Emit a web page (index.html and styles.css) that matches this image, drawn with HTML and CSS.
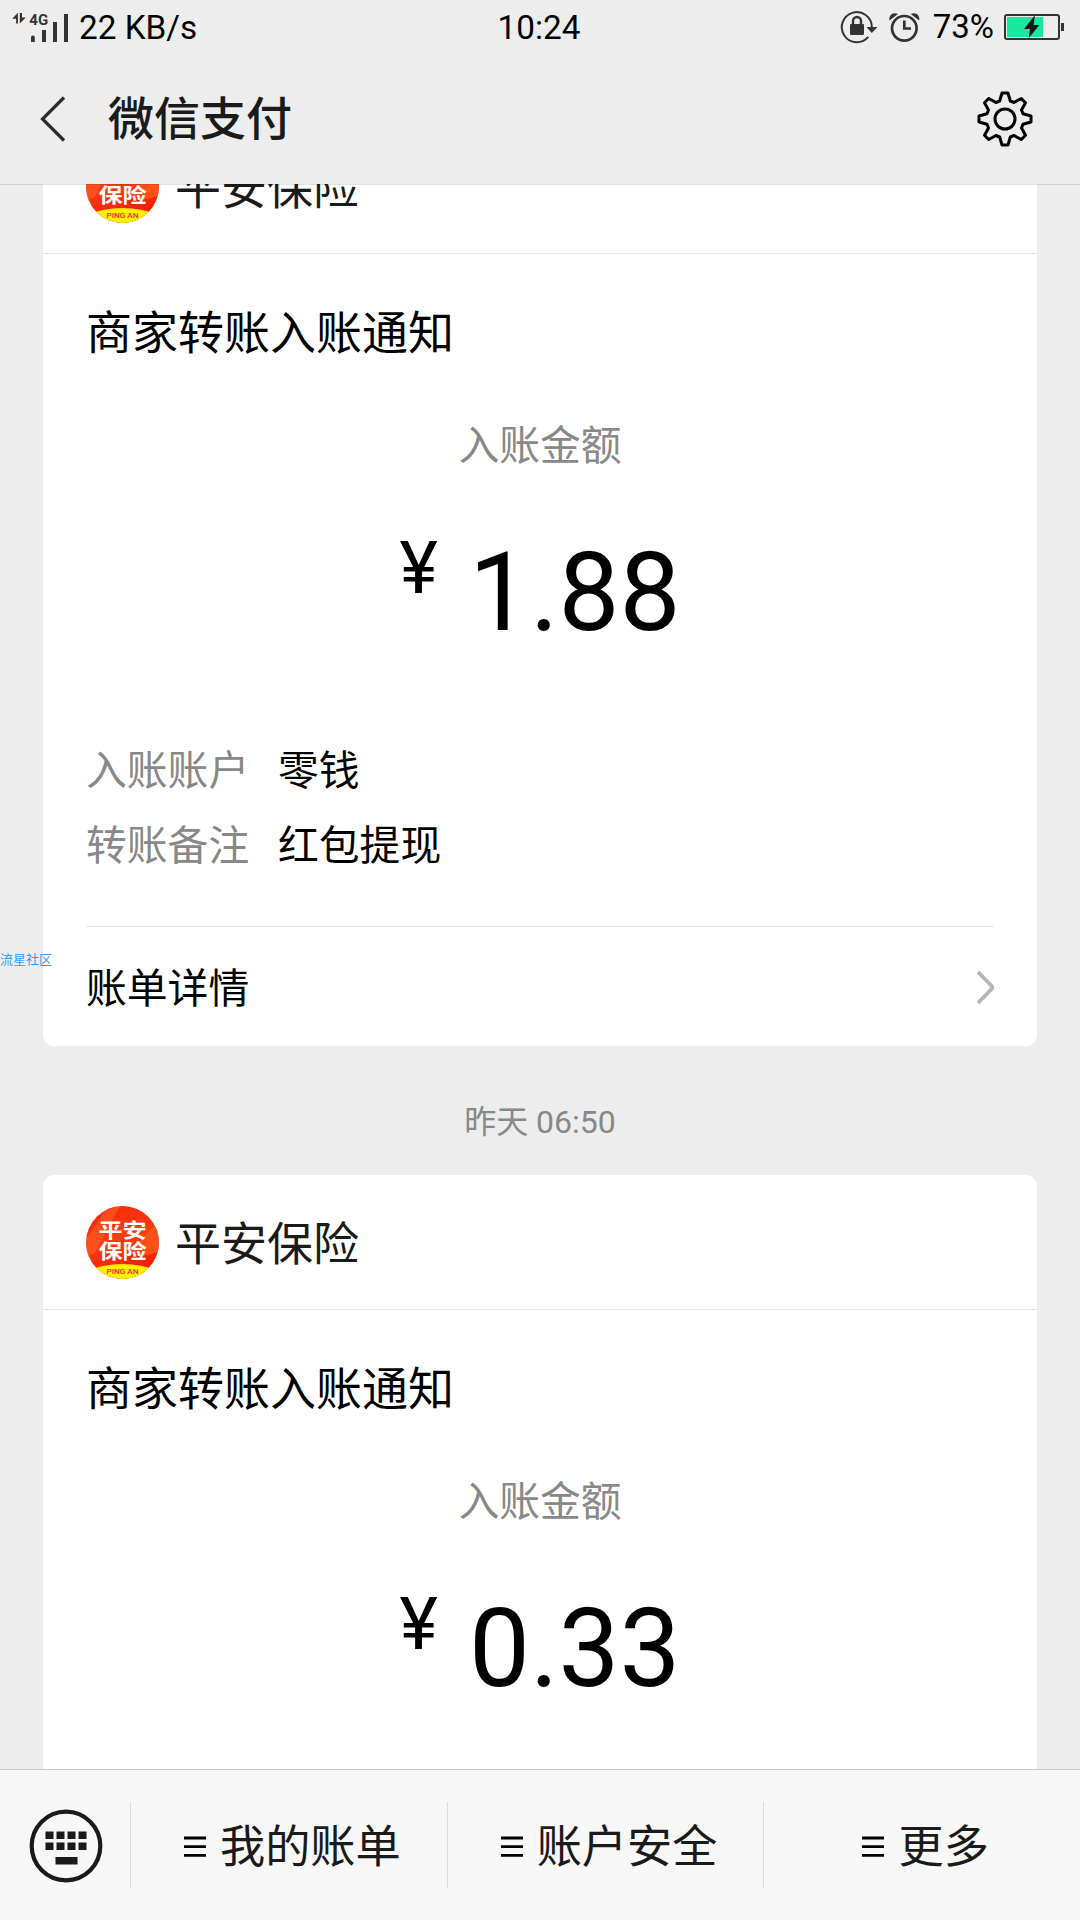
FILE: index.html
```html
<!DOCTYPE html>
<html lang="zh-CN">
<head>
<meta charset="utf-8">
<title>微信支付</title>
<link rel="stylesheet" href="styles.css">
</head>
<body>
<svg class="defs" width="0" height="0" aria-hidden="true">
  <defs>
    <linearGradient id="logo-red" x1="0" y1="0" x2="0.3" y2="1">
      <stop offset="0" stop-color="#f5250a"/>
      <stop offset="0.55" stop-color="#fb3d12"/>
      <stop offset="1" stop-color="#f51c00"/>
    </linearGradient>
    <clipPath id="logo-clip"><circle cx="36.5" cy="36.5" r="36.5"/></clipPath>
    <symbol id="logo" viewBox="0 0 73 73">
      <g clip-path="url(#logo-clip)">
        <rect width="73" height="73" fill="url(#logo-red)"/>
        <path d="M0 34L22 0H34L8 48H0Z" fill="#fc5a20" opacity=".7"/>
        <path d="M73 14L46 44L56 50L73 46Z" fill="#fd5a1c" opacity=".8"/>
        <ellipse cx="36.500" cy="80" rx="48" ry="22" fill="#ffee00"/>
      </g>
      <g transform="translate(12.400 0) scale(1.160 1)">
        <text class="logo-name" x="0" y="31.700">平安</text>
        <text class="logo-name" x="0" y="52.700">保险</text>
      </g>
      <text class="logo-latin" x="20.500" y="67.800" textLength="32" lengthAdjust="spacingAndGlyphs">PING AN</text>
    </symbol>
    <symbol id="menu" viewBox="0 0 22 22">
      <path d="M0 2H22M0 10.700H22M0 19.300H22" stroke="#000" stroke-width="2.800"/>
    </symbol>
  </defs>
</svg>

<div class="screen">
  <header class="top">
    <div class="status">
      <div class="status-left">
        <svg width="60" height="32" viewBox="10 10 60 32">
          <path d="M17.900 11.800L12.200 17.800H16.100V22.400H17.900ZM19.800 12V22.600L25.800 16.600H22V12Z" fill="#333"/>
          <text class="net" x="29.300" y="24">4G</text>
          <path d="M31 36.500a1.900 1.900 0 0 1 3.800 0V41H31ZM42 29H46V41H42ZM53 21H57V41H53ZM64 13H68V41H64Z" fill="#333"/>
        </svg>
        <span class="speed">22 KB/s</span>
      </div>
      <div class="clock">10:24</div>
      <div class="status-right">
        <svg width="84" height="36" viewBox="840 9 84 36" fill="none" stroke="#333">
          <path d="M868.300 36.800A15 15 0 1 1 871.800 27" stroke-width="2"/>
          <path d="M866.500 27H877.500L871.800 33Z" fill="#333" stroke="none"/>
          <rect x="850" y="24" width="14" height="11" rx="1" fill="#333" stroke="none"/>
          <path d="M853 25V21a4 4 0 0 1 8 0V25" stroke-width="2.400"/>
          <circle cx="904.300" cy="28.300" r="12.300" stroke-width="2.700"/>
          <path d="M904.300 20.500V28.500H911" stroke-width="2.700"/>
          <path d="M889.500 20.500C888.500 16 892.500 11.500 898 14ZM919.200 20.500C920.200 16 916.200 11.500 910.700 14Z" fill="#333" stroke="none"/>
        </svg>
        <span class="percent">73%</span>
        <svg width="62" height="28" viewBox="1003 13 62 28">
          <rect x="1005" y="15" width="54" height="24" rx="2" fill="none" stroke="#333" stroke-width="2"/>
          <rect x="1007" y="17" width="36" height="20" fill="#18e8a0"/>
          <rect x="1061" y="23" width="3" height="8" fill="#333"/>
          <path d="M1035 15L1024 29H1030L1028.600 38.500L1039.300 25H1033.600Z" fill="#151515"/>
        </svg>
      </div>
    </div>
    <div class="title-bar">
      <svg class="back" width="28" height="48" viewBox="0 0 28 48"><path d="M25 2.500L3.500 24L25 45.500" fill="none" stroke="#2b2b2b" stroke-width="3.200"/></svg>
      <h1 class="title">微信支付</h1>
      <svg class="gear" width="58" height="58" viewBox="-29 -29 58 58" fill="none" stroke="#000" stroke-width="3" stroke-linejoin="round">
        <path d="M-3 -26H3L5.300 -18L9 -16.500L16.300 -20.500L20.500 -16.300L16.500 -9L18 -5.300L26 -3V3L18 5.300L16.500 9L20.500 16.300L16.300 20.500L9 16.500L5.300 18L3 26H-3L-5.300 18L-9 16.500L-16.300 20.500L-20.500 16.300L-16.500 9L-18 5.300L-26 3V-3L-18 -5.300L-16.500 -9L-20.500 -16.300L-16.300 -20.500L-9 -16.500L-5.300 -18Z"/>
        <circle r="10"/>
      </svg>
    </div>
  </header>

  <main class="chat">
    <section class="card">
      <div class="card-head">
        <svg class="logo" width="73" height="73"><use href="#logo"/></svg>
        <span>平安保险</span>
      </div>
      <div class="card-body">
        <h2 class="card-title">商家转账入账通知</h2>
        <div class="label">入账金额</div>
        <div class="amount"><span class="yen">¥</span><span>1.88</span></div>
        <dl class="details">
          <dt>入账账户</dt><dd>零钱</dd>
          <dt>转账备注</dt><dd>红包提现</dd>
        </dl>
        <div class="more">
          <span>账单详情</span>
          <svg width="18" height="35" viewBox="0 0 18 35"><path d="M2 2L17 17.500L2 33" fill="none" stroke="#b5b5b5" stroke-width="3.800"/></svg>
        </div>
      </div>
    </section>
    <div class="time">昨天 06:50</div>
    <section class="card">
      <div class="card-head">
        <svg class="logo" width="73" height="73"><use href="#logo"/></svg>
        <span>平安保险</span>
      </div>
      <div class="card-body">
        <h2 class="card-title">商家转账入账通知</h2>
        <div class="label">入账金额</div>
        <div class="amount"><span class="yen">¥</span><span>0.33</span></div>
      </div>
    </section>
  </main>

  <nav class="bottom">
    <div class="keyboard">
      <svg width="74" height="74" viewBox="-37 -37 74 74" fill="#1a1a1a">
        <circle r="34.300" fill="none" stroke="#1a1a1a" stroke-width="4.200"/>
        <path d="M-20.500 -14.500h8v7.500h-8zM-9.500 -14.500h8v7.500h-8zM1.500 -14.500h8v7.500h-8zM12.500 -14.500h8v7.500h-8zM-20.500 -3.500h8v7.500h-8zM-9.500 -3.500h8v7.500h-8zM1.500 -3.500h8v7.500h-8zM12.500 -3.500h8v7.500h-8zM-10.500 11h22v7.500h-22z"/>
      </svg>
    </div>
    <div class="tab"><svg width="22" height="22"><use href="#menu"/></svg><span>我的账单</span></div>
    <div class="tab"><svg width="22" height="22"><use href="#menu"/></svg><span>账户安全</span></div>
    <div class="tab"><svg width="22" height="22"><use href="#menu"/></svg><span>更多</span></div>
  </nav>

  <div class="watermark">流星社区</div>
</div>
</body>
</html>
```
FILE: styles.css
```css
* { box-sizing: border-box; }

body {
  margin: 0;
  background: #ededed;
  color: #000;
  font-family: Roboto, "Noto Sans CJK SC", sans-serif;
}

h1, h2, dl, dt, dd { margin: 0; font-weight: 400; }
svg { display: block; flex: none; }
.defs { position: absolute; }

.screen {
  position: relative;
  display: flex;
  flex-direction: column;
  width: 1080px;
  height: 1920px;
  overflow: hidden;
}

/* status bar and title */
.top {
  position: relative;
  z-index: 1;
  flex: none;
  height: 184px;
  background: #ededed;
  box-shadow: 0 1px 0 rgba(0, 0, 0, 0.11);
}
.status {
  display: grid;
  grid-template-columns: 1fr auto 1fr;
  align-items: center;
  height: 54px;
  padding: 0 15px 0 10px;
  font-size: 33px;
  line-height: 54px;
}
.status-left, .status-right { display: flex; align-items: center; }
.status-left { gap: 9px; }
.status-right { justify-content: flex-end; gap: 9px; }
.speed, .clock { padding-top: 2px; font-size: 33.300px; line-height: 52px; }
.clock { padding-left: 3px; }
.net { font-size: 15px; font-weight: 700; fill: #333; }
.title-bar {
  display: flex;
  align-items: center;
  height: 130px;
  padding: 0 46px 0 39px;
}
.title {
  flex: 1;
  margin-left: 41px;
  color: #1a1a1a;
  font-size: 46px;
  font-weight: 500;
  line-height: 60px;
}

/* message list, scrolled so the first card runs under the title */
.chat {
  flex: 1;
  min-height: 0;
  padding: 0 43px;
  overflow: hidden;
}
.card {
  height: 927px;
  border-radius: 11px;
  background: #fff;
}
.card:first-child { margin-top: -65px; }
.card-head {
  display: flex;
  align-items: center;
  gap: 16px;
  height: 135px;
  padding: 0 43px;
  border-bottom: 1px solid #e5e5e5;
  color: #1a1a1a;
  font-size: 46px;
  line-height: 60px;
}
.card-head span { padding-top: 4px; }
.logo-name {
  fill: #fff;
  font-family: "Noto Sans CJK SC", sans-serif;
  font-size: 20.800px;
  font-weight: 700;
}
.logo-latin { fill: #d8360c; font-family: Roboto, sans-serif; font-size: 7.500px; font-weight: 500; }
.card-body { padding: 49px 43px 0; }
.card-title { font-size: 46px; line-height: 60px; }
.label {
  margin-top: 53px;
  color: #888;
  font-size: 40.800px;
  line-height: 60px;
  text-align: center;
}
.amount {
  display: flex;
  justify-content: center;
  align-items: flex-start;
  gap: 31px;
  margin-top: 53px;
  font-size: 108.500px;
  line-height: 128px;
}
.yen { font-size: 73px; line-height: 78px; }
.details {
  display: grid;
  grid-template-columns: 192px 1fr;
  margin-top: 77px;
  font-size: 40.800px;
  line-height: 75px;
}
.details dt { color: #888; }
.more {
  display: flex;
  justify-content: space-between;
  align-items: center;
  margin-top: 42px;
  height: 121px;
  border-top: 1px solid #e5e5e5;
  font-size: 40.800px;
}
.more span { padding-bottom: 4px; }
.time {
  height: 129px;
  color: #888;
  font-size: 32px;
  line-height: 153px;
  text-align: center;
}

/* bottom menu */
.bottom {
  display: flex;
  flex: none;
  align-items: center;
  height: 151px;
  border-top: 1px solid #c8c8c8;
  background: #f7f7f7;
}
.keyboard { width: 130px; padding: 1px 0 0 29px; }
.tab {
  display: flex;
  flex: 1;
  align-items: center;
  justify-content: center;
  gap: 14px;
  height: 86px;
  padding-left: 7px;
  border-left: 1px solid #dcdcdc;
  color: #1a1a1a;
  font-size: 45.200px;
}
.tab svg { margin-top: 3px; }
.tab span { padding-bottom: 3px; }

/* overlay mark at the left edge */
.watermark {
  position: absolute;
  top: 950px;
  left: 0;
  z-index: 2;
  color: #3d97ee;
  font-size: 13px;
  line-height: 20px;
}
```
